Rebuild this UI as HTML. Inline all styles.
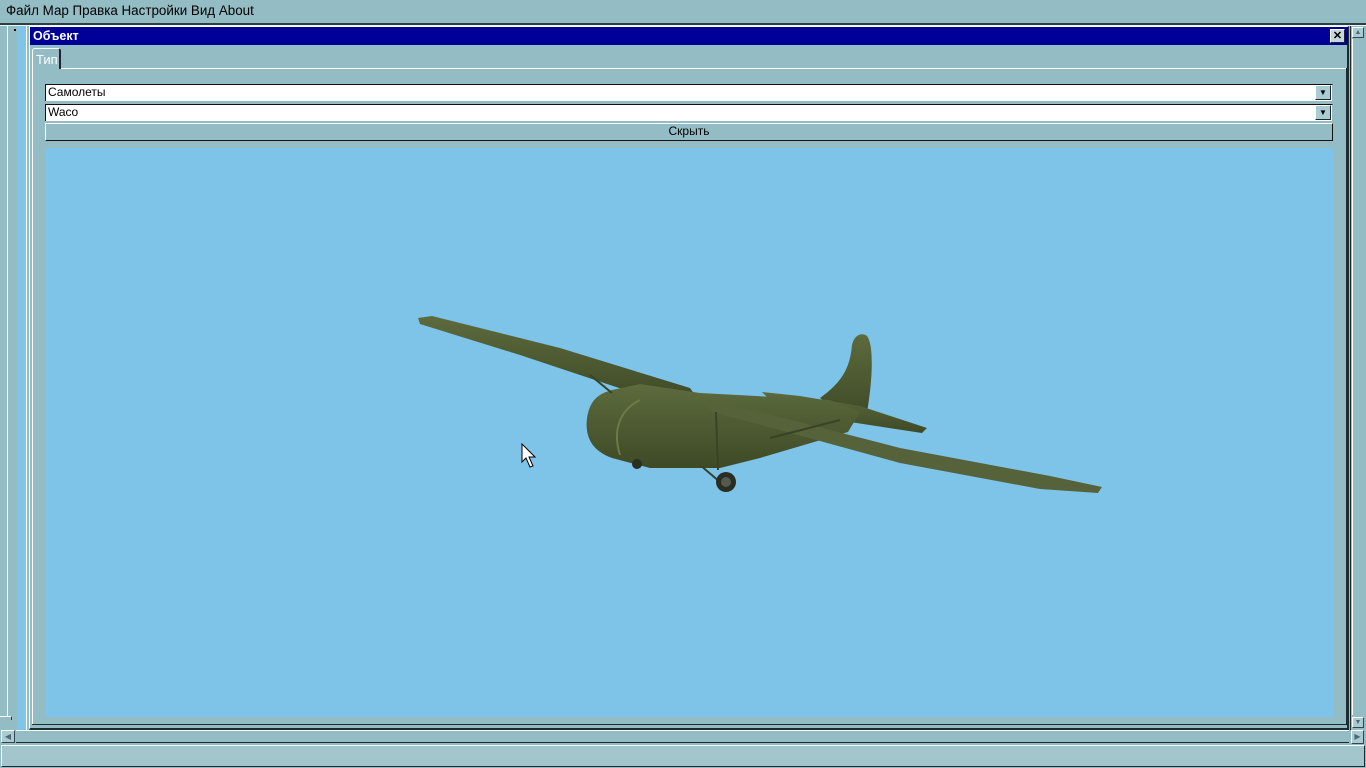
<!DOCTYPE html>
<html><head><meta charset="utf-8"><style>
*{margin:0;padding:0;box-sizing:border-box}
body{width:1366px;height:768px;background:#93bcc4;position:relative;overflow:hidden;font-family:"Liberation Sans",sans-serif;font-size:12px;color:#000}
.a{position:absolute}
</style></head><body>
<div class="a" style="left:6px;top:3px;font-size:13.4px;">Файл Мар Правка Настройки Вид About</div>
<div class="a" style="left:0;top:23px;width:1366px;height:2px;background:#2a3f44"></div>
<div class="a" style="left:0;top:25px;width:1366px;height:1px;background:#e8f4f6"></div>
<!-- left strip -->
<div class="a" style="left:7px;top:26px;width:1px;height:690px;background:#fff"></div>
<div class="a" style="left:17px;top:26px;width:9px;height:704px;background-color:#80c4e8;z-index:2"></div>
<div class="a" style="left:26px;top:26px;width:1px;height:704px;background:#fff"></div>
<div class="a" style="left:14px;top:29px;width:2px;height:2px;background:#000;z-index:3"></div>
<div class="a" style="left:0;top:716px;width:12px;height:4px;border-top:1px solid #fff;border-right:1px solid #333"></div>
<div class="a" style="left:1px;top:730px;width:14px;height:13px;background:#a8ccd2;border:1px solid #fff;border-right-color:#345;border-bottom-color:#345;font-size:8px;color:#567;text-align:center;line-height:11px">◀</div>
<!-- window -->
<div class="a" style="left:29px;top:26px;width:1320px;height:704px;border:1px solid #fff;border-right:2px solid #1d2c30;border-bottom:2px solid #1d2c30"></div>
<div class="a" style="left:30px;top:27px;width:1318px;height:18px;background:#000099;color:#fff;font-weight:bold;font-size:12.5px;line-height:18px;padding-left:3px">Объект</div>
<div class="a" style="left:1330px;top:29px;width:15px;height:14px;background:#c5d8dc;border:1px solid #fff;border-right-color:#223;border-bottom-color:#223;font-size:11px;font-weight:bold;line-height:12px;text-align:center">✕</div>
<!-- tab -->
<div class="a" style="left:32px;top:48px;width:29px;height:21px;border-left:1px solid #fff;border-top:1px solid #fff;border-right:2px solid #223;border-radius:3px 3px 0 0;color:#fff;font-size:13px;padding:3px 0 0 3px">Тип</div>
<div class="a" style="left:61px;top:68px;width:1286px;height:1px;background:#fff"></div>
<div class="a" style="left:32px;top:69px;width:1px;height:656px;background:#fff"></div>
<div class="a" style="left:1346px;top:68px;width:1px;height:657px;background:#1d2c30"></div>
<div class="a" style="left:32px;top:724px;width:1315px;height:1px;background:#1d2c30"></div>
<!-- combos -->
<div class="a" style="left:45px;top:84px;width:1288px;height:17px;background:#fff;border-top:1px solid #111;border-left:1px solid #111;border-right:1px solid #93bcc4;padding-left:2px;line-height:15px">Самолеты</div>
<div class="a" style="left:1315px;top:85px;width:16px;height:15px;background:#a8ccd2;border:1px solid #fff;border-right-color:#223;border-bottom-color:#223;font-size:8px;text-align:center;line-height:13px">▼</div>
<div class="a" style="left:45px;top:104px;width:1288px;height:17px;background:#fff;border-top:1px solid #111;border-left:1px solid #111;border-right:1px solid #93bcc4;padding-left:2px;line-height:15px">Waco</div>
<div class="a" style="left:1315px;top:105px;width:16px;height:15px;background:#a8ccd2;border:1px solid #fff;border-right-color:#223;border-bottom-color:#223;font-size:8px;text-align:center;line-height:13px">▼</div>
<div class="a" style="left:45px;top:123px;width:1288px;height:18px;background:#93bcc4;border:1px solid #fff;border-right-color:#111;border-bottom-color:#111;text-align:center;line-height:15px">Скрыть</div>
<!-- sky -->
<div class="a" style="left:45px;top:148px;width:1288px;height:569px;background:#7ec4e9"></div>
<svg class="a" style="left:0;top:0" width="1366" height="768">
<defs><linearGradient id="g" x1="0" y1="0" x2="0" y2="1"><stop offset="0" stop-color="#5d6b3e"/><stop offset="1" stop-color="#3e4a26"/></linearGradient></defs>
<g fill="url(#g)">
<path d="M418,318 L432,316 L560,348 L690,388 L700,402 L640,395 L520,355 L420,324 Z"/>
<path d="M820,398 C845,380 850,365 852,345 C854,335 862,332 867,336 C874,345 873,380 866,418 L840,414 Z"/>
<path d="M762,392 L800,396 L860,406 L927,428 L922,433 L850,422 L770,400 Z"/>
<path d="M612,390 L640,384 L700,393 L830,400 L860,412 L848,432 L760,458 L720,468 L650,468 L612,458 C590,450 585,435 587,418 C590,400 598,394 612,390 Z"/>
<path d="M707,402 L725,403 L900,448 L1050,476 L1102,487 L1098,493 L1040,489 L900,463 L780,430 L712,412 Z" fill="#56633a"/>
</g>
<path d="M640,400 C620,410 612,430 620,455" stroke="#6b7a48" stroke-width="2" fill="none"/>
<path d="M590,375 L612,393 M716,412 L718,470 M770,438 L840,420 M700,465 L720,482" stroke="#3a4325" stroke-width="2"/>
<circle cx="726" cy="482" r="10" fill="#2a2e22"/><circle cx="726" cy="482" r="5" fill="#555a50"/>
<circle cx="637" cy="464" r="5" fill="#2a2e22"/>
<path d="M522,444 L522,462 L526,458 L530,467 L533,466 L529,457 L535,457 Z" fill="#fff" stroke="#000" stroke-width="1"/>
</svg>
<!-- right scrollbar -->
<div class="a" style="left:1350px;top:26px;width:1px;height:704px;background:#1d2c30"></div>
<div class="a" style="left:1352px;top:27px;width:12px;height:11px;background:#a8ccd2;border:1px solid #fff;border-right-color:#345;border-bottom-color:#345;font-size:7px;color:#567;text-align:center;line-height:9px">▲</div>
<div class="a" style="left:1352px;top:39px;width:1px;height:676px;background:#fff"></div>
<div class="a" style="left:1352px;top:717px;width:12px;height:11px;background:#a8ccd2;border:1px solid #fff;border-right-color:#345;border-bottom-color:#345;font-size:7px;color:#567;text-align:center;line-height:9px">▼</div>
<div class="a" style="left:1351px;top:730px;width:13px;height:14px;background:#a8ccd2;border:1px solid #fff;border-right-color:#345;border-bottom-color:#345;font-size:8px;color:#567;text-align:center;line-height:12px">▶</div>
<!-- bottom -->
<div class="a" style="left:16px;top:730px;width:1333px;height:1px;background:#fff"></div>
<div class="a" style="left:16px;top:742px;width:1333px;height:1px;background:#1d2c30"></div>
<div class="a" style="left:1px;top:745px;width:1364px;height:22px;border:1px solid #fff;border-right-color:#1d2c30;border-bottom-color:#1d2c30;background:#a3c6cc"></div>
</body></html>
